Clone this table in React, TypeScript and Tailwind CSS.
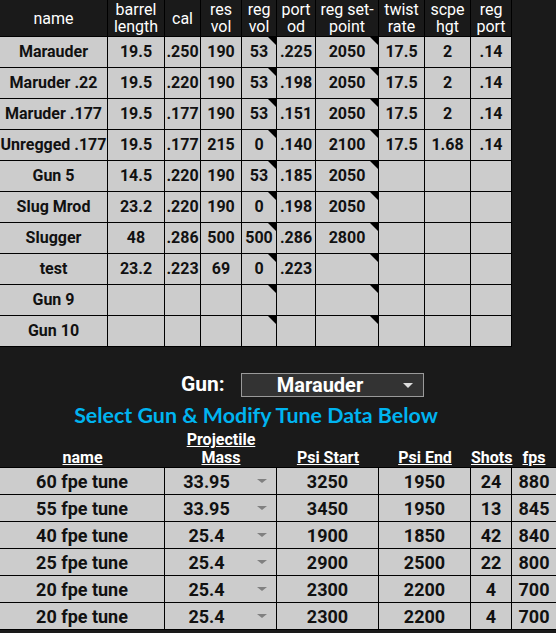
import React from 'react';

const topCols = 'grid-cols-[108px_57px_36px_41px_35px_39px_63px_46px_46px_41px]';
const tuneCols = 'grid-cols-[165px_112px_102px_92px_41px_44px]';

const headers = [
  ['name'],
  ['barrel', 'length'],
  ['cal'],
  ['res', 'vol'],
  ['reg', 'vol'],
  ['port', 'od'],
  ['reg set-', 'point'],
  ['twist', 'rate'],
  ['scpe', 'hgt'],
  ['reg', 'port'],
];

const guns = [
  ['Marauder', '19.5', '.250', '190', '53', '.225', '2050', '17.5', '2', '.14'],
  ['Maruder .22', '19.5', '.220', '190', '53', '.198', '2050', '17.5', '2', '.14'],
  ['Maruder .177', '19.5', '.177', '190', '53', '.151', '2050', '17.5', '2', '.14'],
  ['Unregged .177', '19.5', '.177', '215', '0', '.140', '2100', '17.5', '1.68', '.14'],
  ['Gun 5', '14.5', '.220', '190', '53', '.185', '2050', '', '', ''],
  ['Slug Mrod', '23.2', '.220', '190', '0', '.198', '2050', '', '', ''],
  ['Slugger', '48', '.286', '500', '500', '.286', '2800', '', '', ''],
  ['test', '23.2', '.223', '69', '0', '.223', '', '', '', ''],
  ['Gun 9', '', '', '', '', '', '', '', '', ''],
  ['Gun 10', '', '', '', '', '', '', '', '', ''],
];

const tunes = [
  ['60 fpe tune', '33.95', '3250', '1950', '24', '880'],
  ['55 fpe tune', '33.95', '3450', '1950', '13', '845'],
  ['40 fpe tune', '25.4', '1900', '1850', '42', '840'],
  ['25 fpe tune', '25.4', '2900', '2500', '22', '800'],
  ['20 fpe tune', '25.4', '2300', '2200', '4', '700'],
  ['20 fpe tune', '25.4', '2300', '2200', '4', '700'],
];

// columns that carry a note marker in the corner
const noted = [4, 6];

export default function App() {
  return (
    <div className="w-[556px] h-[633px] overflow-hidden bg-[#1a1a1a] font-['Roboto',sans-serif]">
      {/* gun table */}
      <div className={`grid w-[512px] ${topCols} h-[37px] border-b border-black`}>
        {headers.map((h, i) => (
          <div
            key={i}
            className="flex flex-col items-center justify-center border-r border-black text-center text-[16px] leading-[17px] text-white"
          >
            {h.map((line) => (
              <span key={line} className="whitespace-nowrap">{line}</span>
            ))}
          </div>
        ))}
      </div>
      {guns.map((row, r) => (
        <div key={r} className={`grid w-[512px] ${topCols}`}>
          {row.map((v, c) => (
            <div
              key={c}
              className="relative flex h-[31px] items-center justify-center whitespace-nowrap border-r border-b border-black bg-[#cccccc] text-[16px] font-bold text-[#111111]"
            >
              {v}
              {noted.includes(c) && (
                <span className="absolute top-0 right-0 h-0 w-0 border-l-[8px] border-l-transparent border-t-[8px] border-t-black" />
              )}
            </div>
          ))}
        </div>
      ))}

      {/* gun select */}
      <div className="mt-[26px] flex h-[24px] items-center pl-[181px]">
        <span className="w-[60px] text-[21px] font-bold text-white">Gun:</span>
        <div className="relative flex h-[24px] w-[183px] items-center border border-[#9a9a9a] bg-[#333333]">
          <span className="w-[156px] text-center text-[20px] font-bold leading-none text-white">Marauder</span>
          <span className="absolute right-[10px] top-[9px] h-0 w-0 border-x-[5px] border-x-transparent border-t-[5px] border-t-[#dddddd]" />
        </div>
      </div>

      <div className="mt-[6px] h-[24px] w-[512px] text-center font-['Lato',sans-serif] text-[21.4px] font-bold leading-[24px] text-[#00b4f0]">
        Select Gun &amp; Modify Tune Data Below
      </div>

      {/* tune table */}
      <div className={`mt-[4px] grid h-[36px] ${tuneCols} items-end text-[16px] font-bold leading-[18px] text-white`}>
        <span className="text-center underline">name</span>
        <span className="flex flex-col items-center">
          <span className="underline">Projectile</span>
          <span className="underline">Mass</span>
        </span>
        <span className="text-center underline">Psi Start</span>
        <span className="text-center underline">Psi End</span>
        <span className="text-center underline">Shots</span>
        <span className="text-center underline">fps</span>
      </div>
      <div className="border-t border-black">
        {tunes.map((row, r) => (
          <div key={r} className={`grid ${tuneCols}`}>
            {row.map((v, c) => (
              <div
                key={c}
                className={`relative flex h-[27px] items-center justify-center whitespace-nowrap border-b border-black bg-[#cccccc] text-[18px] font-bold text-[#111111] ${c < 5 ? 'border-r' : ''} ${c === 1 ? 'pr-[28px]' : ''}`}
              >
                {v}
                {c === 1 && (
                  <span className="absolute right-[9px] top-[11px] h-0 w-0 border-x-[5px] border-x-transparent border-t-[4px] border-t-[#808080]" />
                )}
              </div>
            ))}
          </div>
        ))}
      </div>
    </div>
  );
}
